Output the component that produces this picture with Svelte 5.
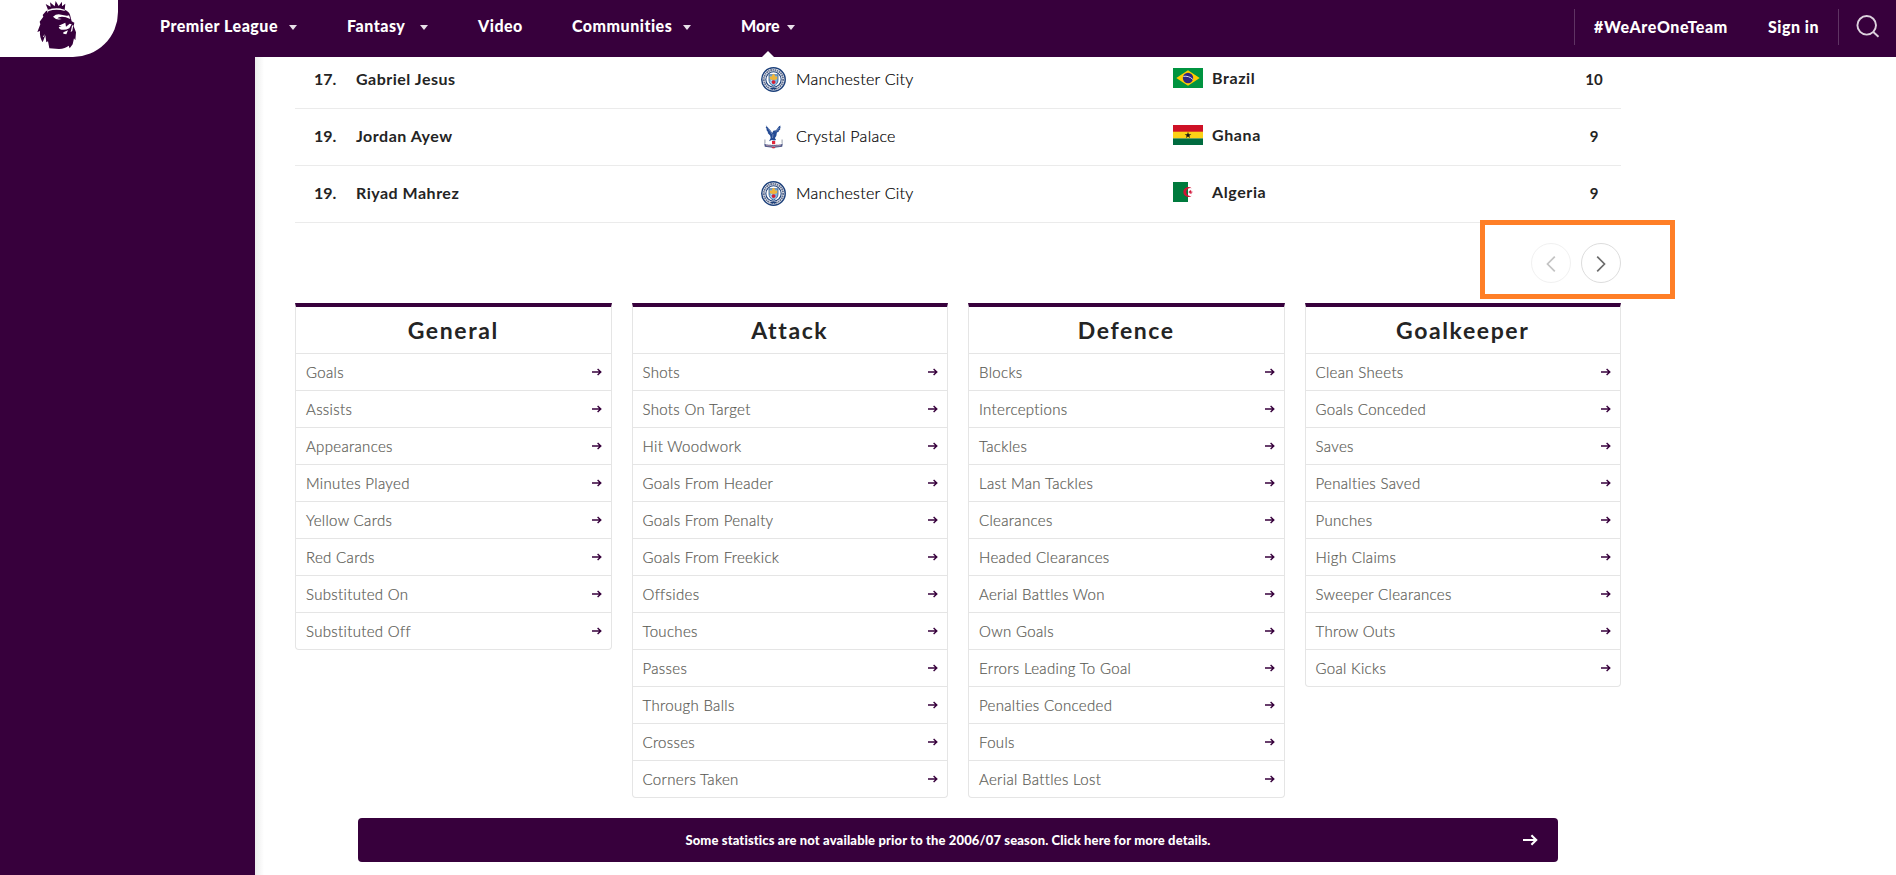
<script>
  const nav = [
    { label: 'Premier League', cls: 'pl', menu: true },
    { label: 'Fantasy', cls: 'fantasy', menu: true },
    { label: 'Video', cls: 'video', menu: false },
    { label: 'Communities', cls: 'communities', menu: true },
    { label: 'More', cls: 'more', menu: true, open: true }
  ];

  const players = [
    { rank: '17.', name: 'Gabriel Jesus', club: 'Manchester City', crest: 'mci', nation: 'Brazil', flag: 'br', stat: 10 },
    { rank: '19.', name: 'Jordan Ayew', club: 'Crystal Palace', crest: 'cry', nation: 'Ghana', flag: 'gh', stat: 9 },
    { rank: '19.', name: 'Riyad Mahrez', club: 'Manchester City', crest: 'mci', nation: 'Algeria', flag: 'dz', stat: 9 }
  ];

  const groups = [
    { title: 'General', items: ['Goals', 'Assists', 'Appearances', 'Minutes Played', 'Yellow Cards', 'Red Cards', 'Substituted On', 'Substituted Off'] },
    { title: 'Attack', items: ['Shots', 'Shots On Target', 'Hit Woodwork', 'Goals From Header', 'Goals From Penalty', 'Goals From Freekick', 'Offsides', 'Touches', 'Passes', 'Through Balls', 'Crosses', 'Corners Taken'] },
    { title: 'Defence', items: ['Blocks', 'Interceptions', 'Tackles', 'Last Man Tackles', 'Clearances', 'Headed Clearances', 'Aerial Battles Won', 'Own Goals', 'Errors Leading To Goal', 'Penalties Conceded', 'Fouls', 'Aerial Battles Lost'] },
    { title: 'Goalkeeper', items: ['Clean Sheets', 'Goals Conceded', 'Saves', 'Penalties Saved', 'Punches', 'High Claims', 'Sweeper Clearances', 'Throw Outs', 'Goal Kicks'] }
  ];
</script>

{#snippet arrow()}
  <svg class="arrow" viewBox="0 0 10 8"><path d="M0 4H8.6M5.6 .9 8.8 4 5.6 7.1" fill="none" stroke="currentColor" stroke-width="1.4" /></svg>
{/snippet}

{#snippet crest(kind)}
  {#if kind === 'mci'}
    <svg class="crest" viewBox="0 0 25 25">
      <circle cx="12.5" cy="12.5" r="11.7" fill="#fff" stroke="#1b3f7a" stroke-width="1.5" />
      <circle cx="12.5" cy="12.5" r="9.6" fill="none" stroke="#3d4d75" stroke-width="1.9" stroke-dasharray="1.4 .6 1.9 .5" stroke-opacity=".8" />
      <circle cx="12.5" cy="12.5" r="7.7" fill="#fff" stroke="#1b3f7a" stroke-width="1.1" />
      <path d="M8 7.8h9v5.4c0 3-2 4.7-4.5 5.9C10 17.900 8 16.200 8 13.200z" fill="#7db4e0" stroke="#2f5488" stroke-width=".8" />
      <path d="M8.800 12V9l1.600 1 .8-2 1.300-1.200L13.800 8l.8 2 1.600-1v3c-2.500 1.300-4.900 1.300-7.400 0z" fill="#efb43a" />
      <path d="M9 14.500l2.500 2.700M10 13.200l4.600 4" stroke="#e9f2fa" stroke-width=".7" />
      <circle cx="12.600" cy="15.100" r="1.900" fill="#d31f35" />
      <path d="M10 21.500h5" stroke="#1b3f7a" stroke-width="1.5" />
    </svg>
  {:else}
    <svg class="crest" viewBox="0 0 25 25">
      <path d="M4.8 1.2 9.2 6l2 3 1.2-2.2 2.6-.5L18.2 2l1.6-.3-1 1.7 1.4.1-1.6 1.6.8.3-2 1.500.7.5-2.200 1.100-.6 3.400-1.400 2.100 1.200 2-2 .6-2.500-.7-2.600 1.300 1.700-3.300-.6-2.500-2.600-2.600.7-.4-2.100-2.800.9-.2-1.400-2.400.9.1z" fill="#244b94" />
      <path d="M7 3.800 11 10M18 4l-3 3.600M12 10l-.5 4" stroke="#8c9ec5" stroke-width=".7" />
      <path d="M3.900 15.500v4M21.100 15.500v4" stroke="#a9afba" stroke-width="1.2" />
      <path d="M11 17h3.200v3.200H11z" fill="#e1263b" />
      <path d="M3.200 19.600c2.600 1.800 5 .7 9.300 1.700 4.300-1 6.700.1 9.300-1.700l-.6 3.100c-2.500.7-5.400-.2-8.700 1.600-3.300-1.800-6.200-.9-8.700-1.600z" fill="#4e5888" />
      <path d="M5.300 21.500c3 .6 4.600-.1 7.200 1.200 2.600-1.300 4.200-.6 7.200-1.200" fill="none" stroke="#d9a3b0" stroke-width=".7" />
      <path d="M11 23.700h3" stroke="#e1263b" stroke-width="1" />
    </svg>
  {/if}
{/snippet}

{#snippet flag(kind)}
  <svg class="flag" viewBox="0 0 30 20">
    {#if kind === 'br'}
      <path d="M0 0h30v20H0z" fill="#009440" />
      <path d="M3.300 10 15 2.300 26.700 10 15 17.700z" fill="#ffcb00" />
      <circle cx="15" cy="10" r="5.200" fill="#302681" />
      <path d="M10.300 8.400c3.500-.7 7 .4 9.600 3.100" fill="none" stroke="#d8dcec" stroke-width="1" />
    {:else if kind === 'gh'}
      <path d="M0 0h30v7H0z" fill="#ce1126" />
      <path d="M0 6.700h30v6.800H0z" fill="#fcd116" />
      <path d="M0 13.400h30V20H0z" fill="#006b3f" />
      <path d="M15 6.800l.8 2.400h2.500l-2 1.500.8 2.400-2.100-1.500-2.100 1.500.8-2.400-2-1.500h2.500z" fill="#151515" />
    {:else}
      <path d="M0 0h15v20H0z" fill="#007a3d" />
      <path d="M15 0h15v20H15z" fill="#fff" />
      <path d="M18.700 6.300a5 5 0 1 0 0 7.400 4 4 0 1 1 0-7.400z" fill="#d21034" />
      <path d="M19.500 10l-3.700-.3 2-1.500.5 3.500-2.500-1.200z" fill="#d21034" stroke="#d21034" stroke-width=".4" />
    {/if}
  </svg>
{/snippet}

<div class="page">
  <header>
    <div class="logo">
      <svg viewBox="0 0 300 180">
        <g fill="#37003c">
          <path d="M69 29 62 12l15 8-2-13 14 12 3-16 9 15 10-13v14l10-8-2 19q-25-10-50-1z" />
          <path d="M68 29q23-10 50 0 13 4 17 15l5 20 8 4-2 11 7 18-2 24-4-6-4 18-9 12-3-8q-10 9-29 10l-29-2-4-21-5 3-3-21-8 21q-10-16-8-34l-8 3 9-23-2-8 11-15-2-5 11-13 4 2z" />
        </g>
        <g fill="#fff">
          <path d="M68 30q24-10 50-1l2 4q-26-7-49 0l-5 6zM84 50q11-10 25-6l20 4-6 4-12-2q-11 0-14 5l13 2q-15 5-26-7zM119 50l13-4 4 11-8-3zM101 77l20-9 2 12 11-9 6 2-7 12q-16 8-29 2l-3-6 9-1zM115 97l14-6-5 12-9-2zM141 77l4-2-3 17-5 5zM54 110l5-8-2 9z" />
        </g>
      </svg>
    </div>
    <nav>
      {#each nav as item}
        <a class={item.cls}>{item.label}{#if item.menu}<i class="caret"></i>{/if}{#if item.open}<i class="pointer"></i>{/if}</a>
      {/each}
    </nav>
    <div class="account">
      <a class="tag">#WeAreOneTeam</a>
      <a class="sign">Sign in</a>
    </div>
    <div class="search">
      <svg viewBox="0 0 24 24"><circle cx="10.7" cy="10.3" r="9.3" /><path d="M17 16.8 22.5 21.7" /></svg>
    </div>
  </header>

  <div class="body">
    <aside></aside>
    <main>
      <div class="table">
        {#each players as p}
          <div class="row">
            <b class="rank">{p.rank}</b>
            <b class="name">{p.name}</b>
            <span class="club">{@render crest(p.crest)}<span>{p.club}</span></span>
            <span class="nation">{@render flag(p.flag)}<b>{p.nation}</b></span>
            <b class="stat">{p.stat}</b>
          </div>
        {/each}
      </div>

      <div class="pager">
        <button class="off" aria-label="Previous"><svg viewBox="0 0 10 16"><path d="M8.8.7 1.5 8l7.3 7.3" /></svg></button>
        <button aria-label="Next"><svg viewBox="0 0 10 16"><path d="M1.2.7 8.5 8l-7.3 7.3" /></svg></button>
        <div class="highlight"></div>
      </div>

      <div class="groups">
        {#each groups as g}
          <section>
            <h2>{g.title}</h2>
            {#each g.items as it}
              <a class="item"><span>{it}</span>{@render arrow()}</a>
            {/each}
          </section>
        {/each}
      </div>

      <a class="banner"><span>Some statistics are not available prior to the 2006/07 season. Click here for more details.</span>{@render arrow()}</a>
    </main>
  </div>
</div>

<style>
  :global(body) { background: #fff; }
  .page {
    width: 1896px; height: 875px; overflow: hidden; display: flex; flex-direction: column;
    font-family: Lato, "Open Sans", sans-serif; color: #242424; font-size: 16px;
    font-variant-ligatures: none;
  }
  svg { display: block; flex: none; }
  header {
    position: relative; z-index: 2; flex: none; height: 57px; background: #37003c; color: #fff;
    display: flex; align-items: center; font-weight: 900; font-size: 16px; letter-spacing: .5px;
  }
  .logo {
    width: 118px; height: 57px; box-sizing: border-box; background: #fff; padding-left: 25px;
    border-bottom-right-radius: 45px; overflow: hidden;
  }
  .logo svg { width: 100px; height: 60px; }
  nav { display: flex; height: 57px; margin-left: 42px; }
  nav a { display: flex; align-items: center; white-space: nowrap; padding-bottom: 6px; box-sizing: border-box; height: 57px; position: relative; }
  .pl { width: 187px; }
  .fantasy { width: 131px; }
  .video { width: 94px; }
  .communities { width: 169px; }
  .more { letter-spacing: 0; }
  .caret {
    margin: 4px 0 0 11px; border: 4px solid transparent; border-top: 5px solid #e9e0ea; border-bottom: 0;
  }
  .fantasy .caret { margin-left: 15px; }
  .more .caret { margin-left: 7px; }
  .pointer {
    position: absolute; left: 21px; bottom: 0; border: 6px solid transparent; border-bottom-color: #fff; border-top: 0;
  }
  .account {
    margin-left: auto; height: 36px; margin-bottom: 3px; padding: 0 19px; width: 225px;
    border: 1px solid #5f3363; border-width: 0 1px; display: flex; align-items: center; justify-content: space-between;
    white-space: nowrap;
  }
  .account a { position: relative; top: -1px; }
  .tag { letter-spacing: .6px; }
  .search { width: 57px; display: flex; padding-left: 17px; box-sizing: border-box; margin-bottom: 3px; }
  .search svg { width: 24px; height: 24px; fill: none; stroke: #ddd2de; stroke-width: 1.9; }

  .body { flex: 1; display: flex; min-height: 0; }
  aside { width: 255px; background: #37003c; flex: none; }
  main {
    flex: 1; padding: 0 275px 0 40px; background: linear-gradient(90deg, #ececec, #fff 9px);
    min-width: 0;
  }
  .table { margin-top: -5px; }
  .row {
    height: 57px; box-sizing: border-box; border-bottom: 1px solid #ebebeb; padding: 0 0 3px 19px;
    display: grid; grid-template-columns: 42px 405px 412px 392px 58px; align-items: center;
  }
  .name { letter-spacing: .5px; }
  .club { display: flex; align-items: center; gap: 10px; font-weight: 300; letter-spacing: .27px; color: #000; -webkit-text-stroke: .2px #000; }
  .crest { width: 25px; height: 25px; position: relative; top: 1px; }
  .nation { display: flex; align-items: center; gap: 9px; letter-spacing: .6px; position: relative; top: -1px; }
  .flag { width: 30px; height: 20px; }
  .stat { text-align: center; font-size: 15px; }

  .pager { position: relative; height: 80px; display: flex; justify-content: flex-end; gap: 10px; padding-top: 20px; box-sizing: border-box; }
  .pager button {
    width: 40px; height: 40px; box-sizing: border-box; padding: 0; border: 1px solid #ddd; border-radius: 50%;
    background: #fff; display: flex; align-items: center; justify-content: center;
  }
  .pager svg { width: 10px; height: 16px; fill: none; stroke: #6c6c6c; stroke-width: 1.7; position: relative; top: 1px; }
  .pager .off { opacity: .4; }
  .highlight { position: absolute; right: -54px; top: -3px; width: 195px; height: 79px; box-sizing: border-box; border: 5px solid #ff7f27; }

  .groups { display: grid; grid-template-columns: repeat(4, 1fr); gap: 20px; align-items: start; height: 515px; }
  section { border: 1px solid #e5e5e5; border-top: 4px solid #37003c; border-radius: 0 0 4px 4px; }
  h2 { margin: 0; height: 46px; line-height: 46px; font-size: 23px; font-weight: 700; text-align: center; letter-spacing: 1.6px; }
  .item {
    height: 37px; box-sizing: border-box; border-top: 1px solid #e5e5e5; padding: 0 9px 1px 10px; display: flex;
    align-items: center; justify-content: space-between; font-size: 15px; color: #5c5c56; white-space: nowrap;
    font-weight: 300; letter-spacing: .33px; -webkit-text-stroke: .2px #5c5c56;
  }
  .item .arrow { width: 10px; height: 8px; color: #37003c; }
  .banner {
    width: 1200px; height: 44px; margin-left: 63px; border-radius: 4px; background: #37003c; color: #fff;
    display: flex; align-items: center; font-size: 13px; font-weight: 900; box-sizing: border-box; padding: 0 20px 0 0;
    letter-spacing: .13px;
  }
  .banner span { flex: 1; text-align: center; padding-left: 15px; }
  .banner .arrow { width: 15px; height: 12px; }
</style>
